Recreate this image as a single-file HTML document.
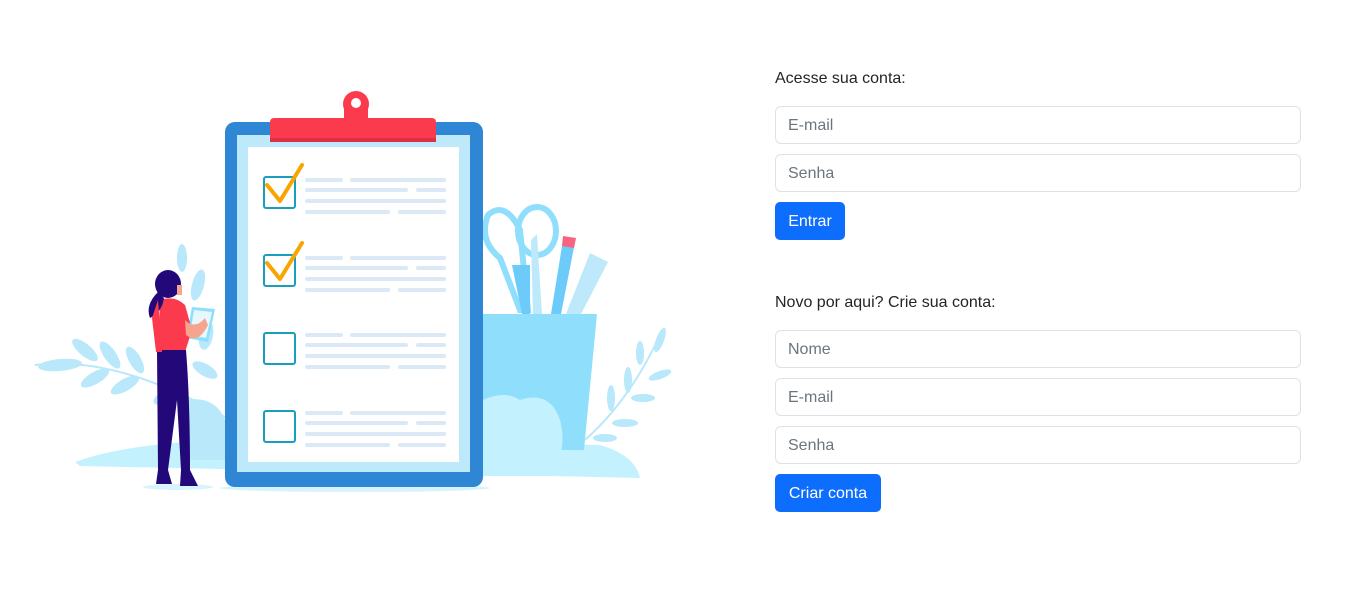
<!DOCTYPE html>
<html><head><meta charset="utf-8"><style>
html,body{margin:0;padding:0;background:#fff;width:1356px;height:596px;overflow:hidden;font-family:"Liberation Sans",Helvetica,Arial,sans-serif;}
svg{position:absolute;left:0;top:0}
.lbl{position:absolute;left:775px;font-size:16px;color:#212529;line-height:20px}
.inp{position:absolute;left:775px;width:524px;height:36px;border:1px solid #dee2e6;border-radius:6px;background:#fff;box-sizing:content-box}
.inp span{position:absolute;left:12px;top:9px;font-size:16px;line-height:20px;color:#6c757d}
.btn{position:absolute;left:775px;height:38px;background:#0d6efd;border-radius:5px;color:#fff;font-size:16px;line-height:39px;text-align:center}
</style></head><body>
<svg width="1356" height="596" viewBox="0 0 1356 596">
 <path d="M75 462 Q120 445 215 440 L600 445 Q635 455 640 478 L80 466 Z" fill="#c3f1fd"/>
 <ellipse cx="355" cy="488" rx="135" ry="4" fill="#d7f3fd"/>
 <ellipse cx="178" cy="487" rx="35" ry="3" fill="#d7f3fd"/>
 <g fill="#b9e8fb">
  <path d="M35 365 Q120 355 230 420" stroke="#b9e8fb" stroke-width="2" fill="none"/>
  <ellipse cx="60" cy="365" rx="22" ry="6" transform="rotate(-5 60 365)"/>
  <ellipse cx="85" cy="350" rx="16" ry="6" transform="rotate(40 85 350)"/>
  <ellipse cx="110" cy="355" rx="16" ry="6" transform="rotate(55 110 355)"/>
  <ellipse cx="95" cy="378" rx="16" ry="6" transform="rotate(-30 95 378)"/>
  <ellipse cx="125" cy="385" rx="16" ry="6" transform="rotate(-30 125 385)"/>
  <ellipse cx="135" cy="360" rx="15" ry="6" transform="rotate(60 135 360)"/>
  <ellipse cx="170" cy="395" rx="18" ry="7" transform="rotate(-25 170 395)"/>
  <ellipse cx="182" cy="258" rx="5" ry="14"/>
  <ellipse cx="198" cy="285" rx="6" ry="16" transform="rotate(15 198 285)"/>
  <ellipse cx="206" cy="335" rx="7" ry="15" transform="rotate(10 206 335)"/>
  <ellipse cx="205" cy="370" rx="14" ry="6" transform="rotate(30 205 370)"/>
  <path d="M185 400 Q215 395 225 420 L225 460 L180 460 Z"/>
 </g>
 <path d="M520 230 Q505 200 488 215 Q478 240 500 258 L520 310 L528 310 Z" fill="none" stroke="#8fdffc" stroke-width="6"/>
 <ellipse cx="537" cy="231" rx="19" ry="24" fill="none" stroke="#8fdffc" stroke-width="6"/>
 <path d="M512 265 L522 314 L530 314 L530 265 Z" fill="#6ccbf9"/>
 <path d="M531 240 L537 234 L542 314 L533 314 Z" fill="#bde9fb"/>
 <path d="M563 240 L575 242 L561 314 L551 314 Z" fill="#6ccbf9"/>
 <path d="M563 236 L576 238 L574 248 L562 246 Z" fill="#f76480"/>
 <path d="M590 253 L608 262 L580 316 L566 314 Z" fill="#bde9fb"/>
 <path d="M483 314 L597 314 L584 450 L483 450 Z" fill="#8fdffc"/>
 <path d="M483 400 Q505 390 520 400 Q550 390 560 420 Q565 440 560 455 L600 458 L640 476 L483 476 Z" fill="#c3f1fd"/>
 <g fill="#b9e8fb">
  <path d="M585 440 Q630 400 660 335" stroke="#b9e8fb" stroke-width="2" fill="none"/>
  <ellipse cx="660" cy="340" rx="4" ry="13" transform="rotate(20 660 340)"/>
  <ellipse cx="640" cy="353" rx="4" ry="12"/>
  <ellipse cx="660" cy="375" rx="12" ry="4" transform="rotate(-20 660 375)"/>
  <ellipse cx="628" cy="380" rx="4" ry="13"/>
  <ellipse cx="643" cy="398" rx="12" ry="4"/>
  <ellipse cx="611" cy="398" rx="4" ry="13"/>
  <ellipse cx="625" cy="423" rx="13" ry="4"/>
  <ellipse cx="605" cy="438" rx="12" ry="4"/>
 </g>
 <rect x="225" y="122" width="258" height="365" rx="10" fill="#2e86d4"/>
 <rect x="237" y="135" width="233" height="337" fill="#bde9fb"/>
 <rect x="248" y="147" width="211" height="315" fill="#fff"/>
 <rect x="344" y="104" width="24" height="16" fill="#fb3a4e"/>
 <circle cx="356" cy="104" r="13" fill="#fb3a4e"/>
 <circle cx="356" cy="103" r="5" fill="#fff"/>
 <rect x="270" y="118" width="166" height="24" rx="4" fill="#fb3a4e"/>
 <rect x="270" y="138" width="166" height="4" fill="#e02f45"/>
 <g id="grp" fill="#dbe8f5">
  <rect x="305" y="178" width="38" height="4" rx="2"/><rect x="350" y="178" width="96" height="4" rx="2"/>
  <rect x="305" y="188" width="103" height="4" rx="2"/><rect x="416" y="188" width="30" height="4" rx="2"/>
  <rect x="305" y="199" width="141" height="4" rx="2"/>
  <rect x="305" y="210" width="85" height="4" rx="2"/><rect x="398" y="210" width="48" height="4" rx="2"/>
 </g>
 <use href="#grp" y="78"/><use href="#grp" y="155"/><use href="#grp" y="233"/>
 <g fill="none" stroke="#1a9ec0" stroke-width="2">
  <rect x="264" y="177" width="31" height="31" rx="2"/>
  <rect x="264" y="255" width="31" height="31" rx="2"/>
  <rect x="264" y="333" width="31" height="31" rx="2"/>
  <rect x="264" y="411" width="31" height="31" rx="2"/>
 </g>
 <g fill="none" stroke="#f8a500" stroke-width="4" stroke-linecap="round" stroke-linejoin="round">
  <path d="M267 185 L280 201 L302 165"/>
  <path d="M267 263 L280 279 L302 243"/>
 </g>
 <path d="M192 307 L215 309 L208 342 L186 338 Z" fill="#8fdffc"/>
 <path d="M194 310 L212 312 L206 338 L190 335 Z" fill="#e8f7fe"/>
 <path d="M160 300 Q175 295 185 305 L192 330 L185 352 L158 352 Z" fill="#fb3a4e"/>
 <path d="M185 320 Q195 330 205 318 L208 325 Q198 345 186 335 Z" fill="#f7a48f"/>
 <path d="M157 350 L186 350 Q190 400 190 470 L181 470 L177 400 L168 470 L158 470 Z" fill="#23087a"/>
 <path d="M158 470 L168 470 L172 484 L156 484 Z" fill="#23087a"/>
 <path d="M181 470 L190 470 L198 486 L180 486 Z" fill="#23087a"/>
 <ellipse cx="168" cy="284" rx="13" ry="14" fill="#23087a"/>
 <path d="M158 292 Q145 305 150 318 Q162 312 164 298 Z" fill="#23087a"/>
 <rect x="177" y="285" width="5" height="10" fill="#f7a48f"/>
 <path d="M152 318 L158 300 L162 352 L156 352 Z" fill="#fb3a4e"/>
</svg>
<div class="lbl" style="top:69px">Acesse sua conta:</div>
<div class="inp" style="top:106px"><span>E-mail</span></div>
<div class="inp" style="top:154px"><span>Senha</span></div>
<div class="btn" style="top:202px;width:70px">Entrar</div>
<div class="lbl" style="top:293px">Novo por aqui? Crie sua conta:</div>
<div class="inp" style="top:330px"><span>Nome</span></div>
<div class="inp" style="top:378px"><span>E-mail</span></div>
<div class="inp" style="top:426px"><span>Senha</span></div>
<div class="btn" style="top:474px;width:106px">Criar conta</div>
</body></html>
